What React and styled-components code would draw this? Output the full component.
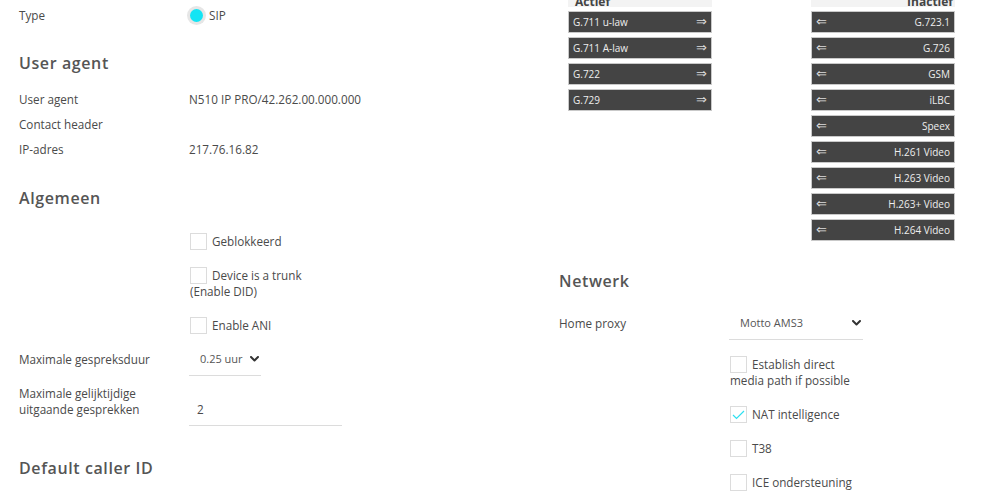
import React from "react";
import styled, { createGlobalStyle } from "styled-components";

const GlobalStyle = createGlobalStyle`
  html, body {
    margin: 0;
    padding: 0;
    background: #fff;
  }
  body {
    font-family: "Open Sans", "Liberation Sans", sans-serif;
    font-size: 11.7px;
    color: #4a4a4a;
    overflow: hidden;
  }
`;

const actief = ["G.711 u-law", "G.711 A-law", "G.722", "G.729"];
const inactief = [
  "G.723.1",
  "G.726",
  "GSM",
  "iLBC",
  "Speex",
  "H.261 Video",
  "H.263 Video",
  "H.263+ Video",
  "H.264 Video",
];

const Chevron = () => (
  <svg width="9" height="6" viewBox="0 0 9 6">
    <polyline
      points="1,1 4.5,4.5 8,1"
      fill="none"
      stroke="#333"
      strokeWidth="2"
      strokeLinecap="round"
      strokeLinejoin="round"
    />
  </svg>
);

const Check = ({ label, checked }) => (
  <CheckItem>
    <Box>
      {checked && (
        <svg width="17" height="17" viewBox="0 0 17 17">
          <polyline
            points="3,9 6.5,12.5 14,5"
            fill="none"
            stroke="#2ee0f0"
            strokeWidth="1.2"
          />
        </svg>
      )}
    </Box>
    {label}
  </CheckItem>
);

const App = () => {
  return (
    <>
      <GlobalStyle />
      <Page>
        <Column $pad={19}>
          <FieldRow $height={30}>
            <Label>Type</Label>
            <RadioLabel>
              <Radio />
              SIP
            </RadioLabel>
          </FieldRow>

          <Heading $top={21} $bottom={11}>
            User agent
          </Heading>
          <InfoRow>
            <Label>User agent</Label>
            <Value>N510 IP PRO/42.262.00.000.000</Value>
          </InfoRow>
          <InfoRow>
            <Label>Contact header</Label>
            <Value />
          </InfoRow>
          <InfoRow>
            <Label>IP-adres</Label>
            <Value>217.76.16.82</Value>
          </InfoRow>

          <Heading $top={25} $bottom={0}>
            Algemeen
          </Heading>
          <CheckList $top={23}>
            <Check label="Geblokkeerd" />
            <Check label="Device is a trunk (Enable DID)" />
            <Check label="Enable ANI" />
          </CheckList>

          <EndRow $top={9}>
            <Label>Maximale gespreksduur</Label>
            <Select $width={72}>
              <span>0.25 uur</span>
              <Chevron />
            </Select>
          </EndRow>
          <EndRow $top={9}>
            <Label>
              Maximale gelijktijdige
              <br />
              uitgaande gesprekken
            </Label>
            <Input defaultValue="2" />
          </EndRow>

          <Heading $top={30} $bottom={0}>
            Default caller ID
          </Heading>
        </Column>

        <Column $pad={0}>
          <Codecs>
            <CodecColumn>
              <CodecHeader>Actief</CodecHeader>
              {actief.map((c) => (
                <Codec key={c}>
                  <span>{c}</span>
                  <Arrow>⇒</Arrow>
                </Codec>
              ))}
            </CodecColumn>
            <CodecColumn>
              <CodecHeader $right>Inactief</CodecHeader>
              {inactief.map((c) => (
                <Codec key={c}>
                  <Arrow>⇐</Arrow>
                  <span>{c}</span>
                </Codec>
              ))}
            </CodecColumn>
          </Codecs>

          <Heading $top={28} $bottom={13}>
            Netwerk
          </Heading>
          <FieldRow $height={34}>
            <Label>Home proxy</Label>
            <Select $width={134}>
              <span>Motto AMS3</span>
              <Chevron />
            </Select>
          </FieldRow>
          <CheckList $top={16}>
            <Check label="Establish direct media path if possible" />
            <Check label="NAT intelligence" checked />
            <Check label="T38" />
            <Check label="ICE ondersteuning" />
          </CheckList>
        </Column>
      </Page>
    </>
  );
};

export default App;

const Page = styled.div`
  display: grid;
  grid-template-columns: 559px 1fr;
  height: 502px;
  overflow: hidden;
`;

const Column = styled.div`
  padding-left: ${(p) => p.$pad}px;
  display: flex;
  flex-direction: column;
`;

const Heading = styled.h2`
  margin: ${(p) => p.$top}px 0 ${(p) => p.$bottom}px;
  font-size: 16px;
  line-height: 24px;
  font-weight: 600;
  letter-spacing: 0.6px;
  color: #555;
`;

const FieldRow = styled.div`
  display: grid;
  grid-template-columns: 170px 1fr;
  align-items: center;
  height: ${(p) => p.$height}px;
`;

const InfoRow = styled.div`
  display: grid;
  grid-template-columns: 170px 1fr;
  align-items: center;
  height: 25px;
`;

const EndRow = styled.div`
  display: grid;
  grid-template-columns: 170px 1fr;
  align-items: end;
  margin-top: ${(p) => p.$top}px;
  > :first-child {
    padding-bottom: 9px;
  }
`;

const Label = styled.div`
  line-height: 16px;
  color: #4a4a4a;
`;

const Value = styled.div`
  color: #4a4a4a;
`;

const RadioLabel = styled.label`
  display: flex;
  align-items: center;
  gap: 3px;
  margin-left: -2px;
`;

const Radio = styled.span`
  width: 19px;
  height: 19px;
  box-sizing: border-box;
  border-radius: 50%;
  background: #e6e6e6;
  display: flex;
  align-items: center;
  justify-content: center;
  &::after {
    content: "";
    width: 13px;
    height: 13px;
    border-radius: 50%;
    background: #14e4f4;
  }
`;

const CheckList = styled.div`
  display: flex;
  flex-direction: column;
  gap: 18px;
  margin: ${(p) => p.$top}px 0 0 171px;
  width: 136px;
`;

const CheckItem = styled.label`
  display: block;
  line-height: 16px;
  color: #4a4a4a;
`;

const Box = styled.span`
  display: inline-block;
  width: 17px;
  height: 17px;
  box-sizing: border-box;
  border: 1px solid #dcdcdc;
  background: #fff;
  vertical-align: top;
  margin: 0 5px -1px 0;
  position: relative;
  svg {
    position: absolute;
    left: -1px;
    top: -1px;
  }
`;

const Select = styled.div`
  width: ${(p) => p.$width}px;
  height: 34px;
  box-sizing: border-box;
  border-bottom: 1px solid #dcdcdc;
  display: flex;
  align-items: center;
  justify-content: space-between;
  padding: 0 2px 0 11px;
  font-size: 11px;
  color: #555;
`;

const Input = styled.input`
  width: 153px;
  height: 34px;
  box-sizing: border-box;
  border: none;
  border-bottom: 1px solid #dcdcdc;
  padding: 0 0 0 8px;
  font-family: inherit;
  font-size: 11.7px;
  color: #4a4a4a;
  outline: none;
  background: transparent;
`;

const Codecs = styled.div`
  display: grid;
  grid-template-columns: 144px 144px;
  column-gap: 99px;
  margin: -8px 0 0 9px;
  align-items: start;
`;

const CodecColumn = styled.div`
  display: flex;
  flex-direction: column;
  gap: 4px;
`;

const CodecHeader = styled.div`
  height: 15px;
  padding: 0 ${(p) => (p.$right ? "2px" : "7px")};
  background: #f3f3f3;
  font-weight: 700;
  font-size: 12px;
  line-height: 16px;
  padding-top: 2px;
  box-sizing: border-box;
  text-align: ${(p) => (p.$right ? "right" : "left")};
  color: #444;
`;

const Codec = styled.div`
  height: 22px;
  box-sizing: border-box;
  border: 1px solid #c9c9c9;
  background: #444;
  color: #eee;
  font-size: 10px;
  display: flex;
  align-items: center;
  justify-content: space-between;
  padding: 0 4px;
`;

const Arrow = styled.span`
  font-family: "DejaVu Sans", sans-serif;
  font-size: 13px;
  line-height: 12px;
  color: #ddd;
`;
